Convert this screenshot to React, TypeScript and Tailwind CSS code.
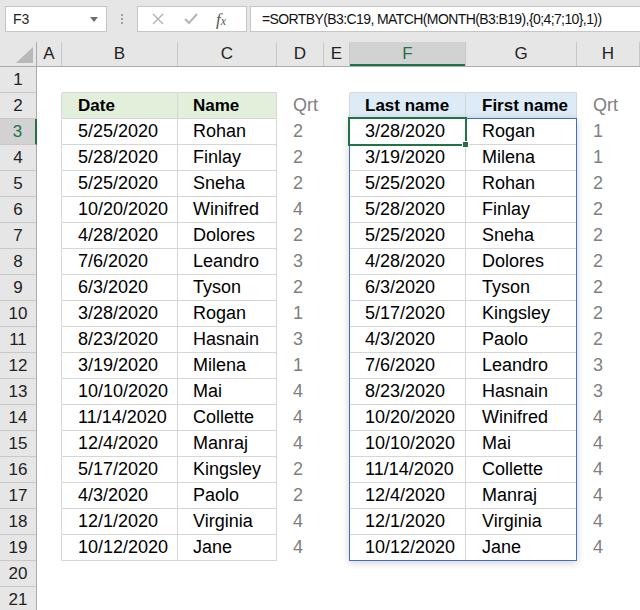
import React from "react";

const COLS = ["A", "B", "C", "D", "E", "F", "G", "H"];
// width of each column, its right grid line included
const WIDTHS = ["w-[25px]", "w-[116px]", "w-[99px]", "w-[47px]", "w-[26px]", "w-[116px]", "w-[111px]", "flex-1"];

const left: [string, string, number][] = [
  ["5/25/2020", "Rohan", 2],
  ["5/28/2020", "Finlay", 2],
  ["5/25/2020", "Sneha", 2],
  ["10/20/2020", "Winifred", 4],
  ["4/28/2020", "Dolores", 2],
  ["7/6/2020", "Leandro", 3],
  ["6/3/2020", "Tyson", 2],
  ["3/28/2020", "Rogan", 1],
  ["8/23/2020", "Hasnain", 3],
  ["3/19/2020", "Milena", 1],
  ["10/10/2020", "Mai", 4],
  ["11/14/2020", "Collette", 4],
  ["12/4/2020", "Manraj", 4],
  ["5/17/2020", "Kingsley", 2],
  ["4/3/2020", "Paolo", 2],
  ["12/1/2020", "Virginia", 4],
  ["10/12/2020", "Jane", 4],
];

const right: [string, string, number][] = [
  ["3/28/2020", "Rogan", 1],
  ["3/19/2020", "Milena", 1],
  ["5/25/2020", "Rohan", 2],
  ["5/28/2020", "Finlay", 2],
  ["5/25/2020", "Sneha", 2],
  ["4/28/2020", "Dolores", 2],
  ["6/3/2020", "Tyson", 2],
  ["5/17/2020", "Kingsley", 2],
  ["4/3/2020", "Paolo", 2],
  ["7/6/2020", "Leandro", 3],
  ["8/23/2020", "Hasnain", 3],
  ["10/20/2020", "Winifred", 4],
  ["10/10/2020", "Mai", 4],
  ["11/14/2020", "Collette", 4],
  ["12/4/2020", "Manraj", 4],
  ["12/1/2020", "Virginia", 4],
  ["10/12/2020", "Jane", 4],
];

type Cell = { text?: string; bold?: boolean; muted?: boolean; fill?: string };

function getCell(row: number, col: number): Cell {
  if (row === 2) {
    if (col === 1) return { text: "Date", bold: true, fill: "green" };
    if (col === 2) return { text: "Name", bold: true, fill: "green" };
    if (col === 3) return { text: "Qrt", muted: true };
    if (col === 5) return { text: "Last name", bold: true, fill: "blue" };
    if (col === 6) return { text: "First name", bold: true, fill: "blue" };
    if (col === 7) return { text: "Qrt", muted: true };
    return {};
  }
  if (row >= 3 && row <= 19) {
    const l = left[row - 3];
    const r = right[row - 3];
    if (col === 1) return { text: l[0] };
    if (col === 2) return { text: l[1] };
    if (col === 3) return { text: String(l[2]), muted: true };
    if (col === 5) return { text: r[0] };
    if (col === 6) return { text: r[1] };
    if (col === 7) return { text: String(r[2]), muted: true };
  }
  return {};
}

// a cell counts as "in a table" when it sits in B2:C19 or F2:G19
function inTable(row: number, col: number) {
  return row >= 2 && row <= 19 && (col === 1 || col === 2 || col === 5 || col === 6);
}

function SheetCell({ row, col }: { row: number; col: number }) {
  const cell = getCell(row, col);
  const rightLine = inTable(row, col) || inTable(row, col + 1);
  const bottomLine = inTable(row, col) || inTable(row + 1, col);
  const pad = col === 5 || col === 2 ? "pl-[15px]" : "pl-[16px]";
  return (
    <div
      className={[
        WIDTHS[col],
        "h-full shrink-0 border-r border-b flex items-center whitespace-nowrap overflow-hidden",
        pad,
        rightLine ? "border-r-[#d6d6d6]" : "border-r-transparent",
        bottomLine ? "border-b-[#d6d6d6]" : "border-b-transparent",
        cell.fill === "green" ? "bg-[#e2efda]" : cell.fill === "blue" ? "bg-[#ddebf7]" : "bg-white",
        cell.bold ? "font-bold text-[17px]" : "",
        cell.muted ? "text-[#808080]" : "text-black",
      ].join(" ")}
    >
      {cell.text}
    </div>
  );
}

function Toolbar() {
  return (
    <div className="h-[42px] bg-[#e6e6e6] flex items-start pt-[6px] pl-[5px]">
      {/* Name box */}
      <div className="w-[102px] h-[26px] bg-white border border-[#c6c6c6] flex items-center justify-between pl-[7px] pr-[8px] text-[14px] text-[#222]">
        <span>F3</span>
        <span className="w-0 h-0 border-l-[4px] border-r-[4px] border-t-[5px] border-l-transparent border-r-transparent border-t-[#6e6e6e]" />
      </div>
      {/* dots */}
      <div className="w-[30px] h-[26px] flex flex-col items-center justify-center gap-[2px]">
        <span className="w-[2px] h-[2px] bg-[#a0a0a0]" />
        <span className="w-[2px] h-[2px] bg-[#a0a0a0]" />
        <span className="w-[2px] h-[2px] bg-[#a0a0a0]" />
      </div>
      {/* cancel / enter / fx */}
      <div className="w-[110px] h-[26px] bg-white border border-[#c6c6c6] flex items-center">
        <svg width="12" height="12" viewBox="0 0 12 12" className="ml-[14px]">
          <path d="M1 1 L11 11 M11 1 L1 11" stroke="#b0b0b0" strokeWidth="1.3" fill="none" />
        </svg>
        <svg width="14" height="12" viewBox="0 0 14 12" className="ml-[20px]">
          <path d="M1 6 L5 10 L13 1" stroke="#b4b4b4" strokeWidth="2" fill="none" />
        </svg>
        <span className="ml-[18px] font-['Liberation_Serif'] italic text-[17px] text-[#555] leading-none">
          f<span className="text-[12px]">x</span>
        </span>
      </div>
      {/* formula */}
      <div className="ml-[3px] flex-1 h-[26px] bg-white border border-r-0 border-[#c6c6c6] flex items-center pl-[11px] text-[14px] tracking-[-0.6px] text-[#111] whitespace-nowrap overflow-hidden">
        =SORTBY(B3:C19, MATCH(MONTH(B3:B19),{"{0;4;7;10}"},1))
      </div>
    </div>
  );
}

function ColumnHeaders() {
  return (
    <div className="flex h-[25px] bg-[#e6e6e6] border-b border-[#ababab] text-[17px] text-[#222]">
      <div className="w-[37px] shrink-0 border-r border-[#ababab] relative">
        <svg width="37" height="24" viewBox="0 0 37 24" className="absolute inset-0">
          <path d="M16 21 L33 21 L33 5 Z" fill="#b8b8b8" />
        </svg>
      </div>
      {COLS.map((c, i) => (
        <div
          key={c}
          className={[
            WIDTHS[i],
            "shrink-0 border-r border-[#c8c8c8] flex items-center justify-center",
            c === "F" ? "bg-[#d2d2d2] text-[#217346] shadow-[inset_0_-2px_0_#217346]" : "",
          ].join(" ")}
        >
          {c}
        </div>
      ))}
    </div>
  );
}

export default function App() {
  const rows = Array.from({ length: 21 }, (_, i) => i + 1);
  return (
    <div className="w-[640px] h-[610px] overflow-hidden bg-white font-['Liberation_Sans',Arial,sans-serif]">
      <Toolbar />
      <ColumnHeaders />
      <div className="relative">
        {rows.map((r) => (
          <div key={r} className="flex h-[26px] text-[18px]">
            <div
              className={[
                "w-[37px] shrink-0 border-r border-b border-b-[#c8c8c8] flex items-center justify-center text-[17px]",
                r === 3
                  ? "bg-[#d2d2d2] text-[#217346] border-r-[#217346] border-r-2"
                  : "bg-[#e6e6e6] text-[#222] border-r-[#ababab]",
              ].join(" ")}
            >
              {r}
            </div>
            {COLS.map((_, ci) => (
              <SheetCell key={ci} row={r} col={ci} />
            ))}
          </div>
        ))}

        {/* spill range F3:G19 */}
        <div className="absolute left-[349px] top-[51px] w-[228px] h-[443px] border border-[#3f6fc0] shadow-[0_2px_8px_rgba(0,0,0,0.18)] pointer-events-none" />
        {/* active cell F3 */}
        <div className="absolute left-[348px] top-[50px] w-[119px] h-[29px] border-2 border-[#217346] pointer-events-none" />
        <div className="absolute left-[462px] top-[74px] w-[7px] h-[7px] bg-[#217346] border border-white pointer-events-none" />
      </div>
    </div>
  );
}
